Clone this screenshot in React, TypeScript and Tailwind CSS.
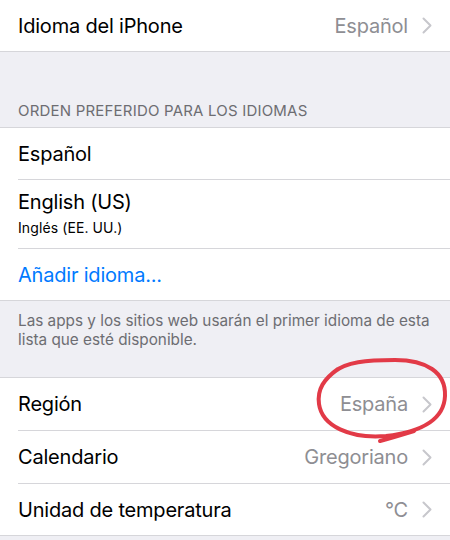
import React from "react";

// Settings > General > Idioma y región (iOS style)

const Chevron: React.FC = () => (
    <svg width="10" height="17" viewBox="0 0 10 17" className="ml-[14px] shrink-0">
        <path d="M1.5 1.5 L8.5 8.5 L1.5 15.5" fill="none" stroke="#c7c7cc" strokeWidth="2" strokeLinecap="round" strokeLinejoin="round" />
    </svg>
);

interface RowProps {
    label: string;
    value?: string;
    last?: boolean;
    height?: string;
}

const Row: React.FC<RowProps> = ({ label, value, last, height = "h-[52px]" }) => (
    <div className="bg-white pl-[18px]">
        <div className={`flex items-center pr-[18px] ${height} ${last ? "" : "border-b border-[#d6d6da]"}`}>
            <span className="flex-1 text-[20px] tracking-[-0.2px] text-black">{label}</span>
            {value !== undefined && (
                <>
                    <span className="text-[20px] tracking-[-0.2px] text-[#8e8e93]">{value}</span>
                    <Chevron />
                </>
            )}
        </div>
    </div>
);

const App: React.FC = () => {
    return (
        <div
            className="relative w-[450px] h-[540px] overflow-hidden bg-[#efeff4]"
            style={{ fontFamily: "Inter, 'Open Sans', sans-serif" }}
        >
            {/* iPhone language */}
            <div className="border-b border-[#d6d6da]">
                <Row label="Idioma del iPhone" value="Español" last height="h-[51px]" />
            </div>

            <div className="flex h-[75px] items-end pb-[7px] pl-[18px]">
                <span className="text-[15px] leading-[18px] tracking-[0.2px] text-[#6d6d72] uppercase">Orden preferido para los idiomas</span>
            </div>

            {/* preferred languages */}
            <div className="border-y border-[#d6d6da]">
                <Row label="Español" />
                <div className="bg-white pl-[18px]">
                    <div className="h-[69px] border-b border-[#d6d6da] pt-[10px]">
                        <div className="text-[20px] leading-[24px] tracking-[-0.2px] text-black">English (US)</div>
                        <div className="mt-[5px] text-[14px] leading-[18px] tracking-[0.1px] text-black">Inglés (EE. UU.)</div>
                    </div>
                </div>
                <div className="bg-white pl-[18px]">
                    <div className="flex h-[51px] items-center">
                        <span className="text-[20px] tracking-[-0.2px] text-[#007aff]">Añadir idioma...</span>
                    </div>
                </div>
            </div>

            <div className="h-[76px] px-[18px] pt-[10px]">
                <p className="text-[15.3px] leading-[19px] text-[#6d6d72]">
                    Las apps y los sitios web usarán el primer idioma de esta lista que esté disponible.
                </p>
            </div>

            {/* region */}
            <div className="border-y border-[#d6d6da]">
                <Row label="Región" value="España" height="h-[53px]" />
                <Row label="Calendario" value="Gregoriano" height="h-[53px]" />
                <Row label="Unidad de temperatura" value="°C" last height="h-[51px]" />
            </div>

            {/* red hand-drawn annotation */}
            <svg className="pointer-events-none absolute inset-0" width="450" height="540" viewBox="0 0 450 540">
                <path
                    d="M334 372 C346 362 366 360 395 360 C426 360 446 372 445 396 C444 420 420 432 386 436 C350 439 322 426 319 404 C317 389 324 379 338 369"
                    fill="none"
                    stroke="#e23a47"
                    strokeWidth="4"
                    strokeLinecap="round"
                />
                <path d="M414 431 C401 435 391 438 380 441" fill="none" stroke="#e23a47" strokeWidth="4" strokeLinecap="round" />
            </svg>
        </div>
    );
};

export default App;
